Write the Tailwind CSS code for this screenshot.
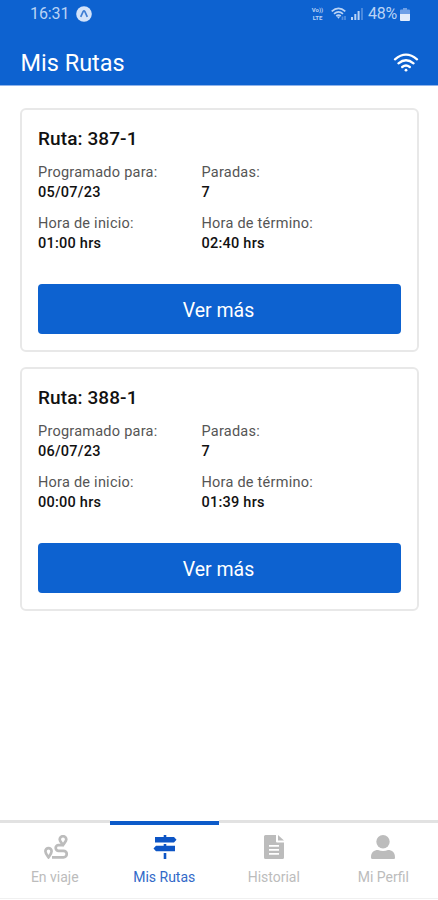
<!DOCTYPE html>
<html lang="es">
<head>
<meta charset="utf-8">
<meta name="viewport" content="width=device-width, initial-scale=1">
<title>Mis Rutas</title>
<script src="https://cdn.jsdelivr.net/npm/@tailwindcss/browser@4"></script>
</head>
<body class="bg-white font-['Roboto',sans-serif]">
<div class="flex h-[900px] w-[438px] flex-col overflow-hidden bg-white text-[#111]">
  <header class="flex h-[86px] shrink-0 flex-col border-b border-[#8fb3ea] bg-[#0d62d0] text-white">
    <div class="flex h-7 items-center justify-between pl-[30px] pr-[28px] text-[#b9d3f5]">
      <div class="flex items-center gap-[7px]">
        <span class="w-[39px] whitespace-nowrap text-[16px] leading-7 tracking-[-0.1px]">16:31</span>
        <svg class="size-4" viewBox="0 0 16 16"><circle cx="8" cy="8" r="7.800" fill="#d3e3fa"/><path d="M4.700 10.800 7.200 5.500Q8 4.300 8.800 5.500l2.500 5.300" fill="none" stroke="#3f7dd3" stroke-width="1.700"/></svg>
      </div>
      <div class="flex items-center">
        <div class="mr-[7px] flex w-[13px] flex-col items-center text-[6px] font-bold leading-[8px]"><span>Vo))</span><span>LTE</span></div>
        <svg class="mr-1 h-[14px] w-4" viewBox="0 0 16 14" fill="none" stroke="#b9d3f5" stroke-width="1.700"><path d="M.7 4.300Q7.500-1.700 14.300 4.300M3 6.800q4.500-3.800 9 0M5.200 9q2.300-1.900 4.600 0"/><path d="m5.800 9.500 1.700 2.300L9.200 9.500z" fill="#b9d3f5" stroke="none"/><path d="M11.500 13V9.500M14 13V9" stroke-opacity=".4"/></svg>
        <svg class="mr-[5px] h-3 w-3" viewBox="0 0 12 12" fill="#b9d3f5"><path d="M0 9h2v3H0zM3.300 6h2v6h-2zM6.600 3h2v9h-2z"/><path d="M10 0h2v12h-2z" opacity=".35"/></svg>
        <span class="w-[32px] whitespace-nowrap text-[16px] leading-7 tracking-[-0.200px]">48%</span>
        <svg class="h-[13px] w-[10px]" viewBox="0 0 10 13"><path d="M3 0h4v1.500h2q1 0 1 1V6H0V2.500q0-1 1-1h2z" fill="#6ea0e6"/><path d="M0 6h10v6q0 1-1 1H1q-1 0-1-1z" fill="#e2edfb"/></svg>
      </div>
    </div>
    <div class="flex flex-1 items-center justify-between pl-[20.500px] pr-[19px] pt-3">
      <h1 class="pt-px text-[23.500px] leading-7">Mis Rutas</h1>
      <svg class="h-[19px] w-[26px]" viewBox="0 0 26 19" fill="none" stroke="#fff" stroke-width="2.300" stroke-linecap="round"><path d="M2 6.300Q13-3 24 6.300M5.500 10.300q7.500-6.200 15 0M9.200 14q3.800-3 7.600 0"/><circle cx="13" cy="17.200" r="1.400" fill="#fff" stroke="none"/></svg>
    </div>
  </header>

  <main class="flex flex-1 flex-col gap-[15px] pl-5 pr-[19px] pt-[22px]">
    <section class="h-[244px] rounded-[6px] border-2 border-[#e8e8e8] px-4 pt-4">
      <h2 class="text-[19px] font-medium leading-[26px] tracking-[0.1px]">Ruta: 387-1</h2>
      <dl class="mt-[11px] grid grid-cols-[163.500px_1fr] gap-y-[11px] text-[14.500px] leading-5 tracking-[0.240px]">
        <div><dt class="text-[#555]">Programado para:</dt><dd class="font-medium">05/07/23</dd></div>
        <div><dt class="text-[#555]">Paradas:</dt><dd class="font-medium">7</dd></div>
        <div><dt class="text-[#555]">Hora de inicio:</dt><dd class="font-medium">01:00 hrs</dd></div>
        <div><dt class="text-[#555]">Hora de término:</dt><dd class="font-medium">02:40 hrs</dd></div>
      </dl>
      <button class="mt-[30px] block h-[50px] w-full rounded-[4px] bg-[#0d62d0] pr-[2px] pt-[3px] text-[19.500px] text-white">Ver más</button>
    </section>
    <section class="h-[244px] rounded-[6px] border-2 border-[#e8e8e8] px-4 pt-4">
      <h2 class="text-[19px] font-medium leading-[26px] tracking-[0.1px]">Ruta: 388-1</h2>
      <dl class="mt-[11px] grid grid-cols-[163.500px_1fr] gap-y-[11px] text-[14.500px] leading-5 tracking-[0.240px]">
        <div><dt class="text-[#555]">Programado para:</dt><dd class="font-medium">06/07/23</dd></div>
        <div><dt class="text-[#555]">Paradas:</dt><dd class="font-medium">7</dd></div>
        <div><dt class="text-[#555]">Hora de inicio:</dt><dd class="font-medium">00:00 hrs</dd></div>
        <div><dt class="text-[#555]">Hora de término:</dt><dd class="font-medium">01:39 hrs</dd></div>
      </dl>
      <button class="mt-[30px] block h-[50px] w-full rounded-[4px] bg-[#0d62d0] pr-[2px] pt-[3px] text-[19.500px] text-white">Ver más</button>
    </section>
  </main>

  <nav class="mb-px grid h-[79px] shrink-0 grid-cols-4 border-b border-[#f0f0f0] text-center text-[14px] leading-5 text-[#bcbcbc]">
    <a class="flex flex-col items-center border-t-[3px] border-[#e2e2e2] pt-3">
      <svg class="ml-[2px] h-6 w-6" viewBox="0 0 24 24" fill="none" stroke="currentColor" stroke-width="2.700"><path d="M4.500 22.300C2.700 19.800 1.400 18.300 1.400 16.200a3.100 3.100 0 0 1 6.200 0c0 2.100-1.300 3.600-3.100 6.100zM19 10c-1.800-2.500-3.300-4-3.300-5.500a3.300 3.300 0 0 1 6.600 0c0 1.500-1.500 3-3.300 5.500z"/><path d="M18 10.200h-3.500a2.800 2.800 0 0 0 0 5.600h5a3.250 3.250 0 0 1 0 6.500H8"/></svg>
      <span class="mt-2">En viaje</span>
    </a>
    <a class="mt-px flex flex-col items-center border-t-[4px] border-[#0d5bc9] pt-[10px] text-[#3269c8]">
      <svg class="ml-px h-6 w-6" viewBox="0 0 24 24" fill="#0d55c5"><path d="M10.700 0h2.600v2H21l2.500 2.700L21 7.500H2V2h8.700zM10.700 9h2.600v1.700H22v5.500H3L.5 13.500 3 10.700h7.700zM10.700 18h2.600v6h-2.600z"/></svg>
      <span class="mt-2">Mis Rutas</span>
    </a>
    <a class="flex flex-col items-center border-t-[3px] border-[#e2e2e2] pt-3">
      <svg class="h-6 w-5" viewBox="0 0 20 24" fill="currentColor"><path fill-rule="evenodd" d="M0 1.500Q0 0 1.500 0H12v6.500q0 1 1 1h7V22.500q0 1.500-1.500 1.500h-17Q0 24 0 22.500zM5 10v1.700h10V10zm0 4v1.700h10V14zm0 4v1.700h10V18z"/><path d="M14 0v5.500h6z"/></svg>
      <span class="mt-2">Historial</span>
    </a>
    <a class="flex flex-col items-center border-t-[3px] border-[#e2e2e2] pt-3">
      <svg class="h-6 w-6" viewBox="0 0 24 24" fill="currentColor"><circle cx="12" cy="6.700" r="6.700"/><path d="M0 22.500C0 17 3 15 7 15q5 1.800 10 0c4 0 7 2 7 7.500 0 1-.5 1.500-1.500 1.500h-21Q0 24 0 22.500z"/></svg>
      <span class="mt-2">Mi Perfil</span>
    </a>
  </nav>
</div>
</body>
</html>
